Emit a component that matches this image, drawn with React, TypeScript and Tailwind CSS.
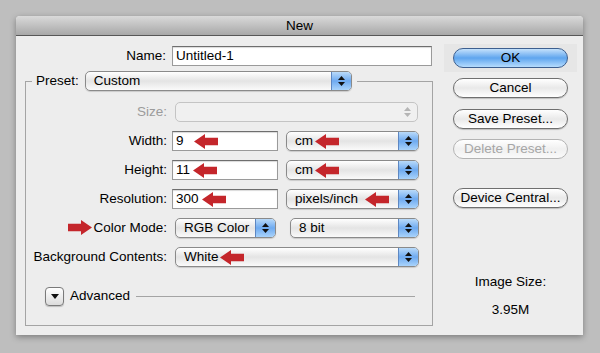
import React from 'react';

function RedArrow({ dir = 'left', className = '' }: { dir?: 'left' | 'right'; className?: string }) {
  return (
    <svg
      width="24"
      height="15"
      viewBox="0 0 24 15"
      className={`absolute ${className}`}
      style={dir === 'right' ? { transform: 'scaleX(-1)' } : undefined}
    >
      <polygon points="0,7.5 11,0 11,3.8 24,3.8 24,11.2 11,11.2 11,15" fill="#c4262b" />
    </svg>
  );
}

function Stepper({ disabled }: { disabled?: boolean }) {
  return (
    <div
      className={`w-[20px] h-full flex flex-col items-center justify-center gap-[2px] rounded-r-[4px] ${
        disabled ? '' : 'bg-gradient-to-b from-[#b9daf9] via-[#6eaaf0] to-[#a9d3fb] border-l border-[#5d87c2]'
      }`}
    >
      <svg width="7" height="4" viewBox="0 0 7 4">
        <polygon points="3.5,0 7,4 0,4" fill={disabled ? '#b5b5b5' : '#111'} />
      </svg>
      <svg width="7" height="4" viewBox="0 0 7 4">
        <polygon points="0,0 7,0 3.5,4" fill={disabled ? '#b5b5b5' : '#111'} />
      </svg>
    </div>
  );
}

function Select({
  width,
  value,
  disabled,
  children,
}: {
  width: string;
  value?: string;
  disabled?: boolean;
  children?: React.ReactNode;
}) {
  return (
    <div
      className={`relative ${width} h-[20px] flex items-stretch rounded-[5px] border ${
        disabled
          ? 'border-[#c4c4c4] bg-[#f0f0f0]'
          : 'border-[#8a8a8a] bg-gradient-to-b from-white via-[#e4e4e4] to-[#fafafa] shadow-[0_1px_1px_rgba(0,0,0,0.15)]'
      }`}
    >
      <div className="flex-1 flex items-center pl-[8px] leading-none text-black">{value}</div>
      <Stepper disabled={disabled} />
      {children}
    </div>
  );
}

function TextInput({ width, value, children }: { width: string; value: string; children?: React.ReactNode }) {
  return (
    <div
      className={`relative ${width} h-[20px] flex items-center pl-[3px] bg-white border border-[#9a9a9a] border-t-[#6e6e6e] shadow-[inset_0_1px_1px_rgba(0,0,0,0.15)] leading-none text-black`}
    >
      {value}
      {children}
    </div>
  );
}

function Row({ label, labelClass = 'text-black', children }: { label: React.ReactNode; labelClass?: string; children: React.ReactNode }) {
  return (
    <div className="flex items-center h-[20px]">
      <div className={`relative w-[141px] text-right whitespace-nowrap ${labelClass}`}>{label}</div>
      <div className="flex items-center ml-[5px]">{children}</div>
    </div>
  );
}

function AquaButton({ label, primary, disabled }: { label: string; primary?: boolean; disabled?: boolean }) {
  return (
    <div
      className={`w-[115px] h-[20px] rounded-full border flex items-center justify-center leading-none ${
        primary
          ? 'border-[#3d5f8f] bg-gradient-to-b from-[#c4e1fb] via-[#5ea5ee] to-[#b5dcfd] text-black'
          : disabled
          ? 'border-[#b3b3b3] bg-gradient-to-b from-white via-[#f0f0f0] to-[#fafafa] text-[#a6a6a6]'
          : 'border-[#6f6f6f] bg-gradient-to-b from-white via-[#e9e9e9] to-white text-black shadow-[0_1px_1px_rgba(0,0,0,0.2)]'
      }`}
    >
      {label}
    </div>
  );
}

export default function App() {
  return (
    <div className="w-[600px] h-[353px] bg-[#bebebe] pt-[16px] pl-[16px] font-['Liberation_Sans',sans-serif] text-[13.5px] overflow-hidden">
      <div className="w-[567px] h-[319px] bg-[#ededed] flex flex-col rounded-t-[4px] shadow-[0_2px_6px_rgba(0,0,0,0.35)]">
        <div className="h-[20px] rounded-t-[4px] bg-gradient-to-b from-[#dadada] to-[#a8a8a8] border-b border-[#575757] flex items-center justify-center text-black leading-none">
          New
        </div>
        <div className="flex flex-1">
          <div className="w-[416px] pl-[9px] pt-[10px]">
            <div className="flex items-center h-[20px]">
              <div className="w-[141px] text-right text-black">Name:</div>
              <div className="ml-[6px]">
                <TextInput width="w-[260px]" value="Untitled-1" />
              </div>
            </div>

            <div className="mt-[15px] w-[408px] h-[245px] border border-[#a4a4a4]">
              <div className="-mt-[11px] ml-[6px] w-fit flex items-center bg-[#ededed] pl-[4px] pr-[5px] h-[20px]">
                <span className="text-black mr-[6px]">Preset:</span>
                <Select width="w-[267px]" value="Custom" />
              </div>

              <div className="mt-[11px] flex flex-col gap-[9px]">
                <Row label="Size:" labelClass="text-[#9b9b9b]">
                  <div className="ml-[3px]">
                    <Select width="w-[243px]" disabled />
                  </div>
                </Row>
                <Row label="Width:">
                  <TextInput width="w-[106px]" value="9">
                    <RedArrow className="left-[21px] top-[1.5px]" />
                  </TextInput>
                  <div className="ml-[8px]">
                    <Select width="w-[133px]" value="cm">
                      <RedArrow className="left-[28px] top-[1.5px]" />
                    </Select>
                  </div>
                </Row>
                <Row label="Height:">
                  <TextInput width="w-[106px]" value="11">
                    <RedArrow className="left-[20px] top-[1.5px]" />
                  </TextInput>
                  <div className="ml-[8px]">
                    <Select width="w-[133px]" value="cm">
                      <RedArrow className="left-[28px] top-[1.5px]" />
                    </Select>
                  </div>
                </Row>
                <Row label="Resolution:">
                  <TextInput width="w-[106px]" value="300">
                    <RedArrow className="left-[29px] top-[1.5px]" />
                  </TextInput>
                  <div className="ml-[8px]">
                    <Select width="w-[133px]" value="pixels/inch">
                      <RedArrow className="left-[78px] top-[1.5px]" />
                    </Select>
                  </div>
                </Row>
                <Row
                  label={
                    <>
                      <RedArrow dir="right" className="left-[42px] top-[2px]" />
                      Color Mode:
                    </>
                  }
                >
                  <div className="ml-[3px]">
                    <Select width="w-[101px]" value="RGB Color" />
                  </div>
                  <div className="ml-[14px]">
                    <Select width="w-[129px]" value="8 bit" />
                  </div>
                </Row>
                <Row label="Background Contents:">
                  <div className="ml-[3px]">
                    <Select width="w-[244px]" value="White">
                      <RedArrow className="left-[44px] top-[1.5px]" />
                    </Select>
                  </div>
                </Row>
              </div>

              <div className="mt-[20px] ml-[19px] flex items-center h-[19px]">
                <div className="w-[19px] h-[19px] rounded-[4px] border border-[#7a7a7a] bg-gradient-to-b from-white to-[#dcdcdc] flex items-center justify-center shadow-[0_1px_1px_rgba(0,0,0,0.2)]">
                  <svg width="8" height="5" viewBox="0 0 8 5">
                    <polygon points="0,0 8,0 4,5" fill="#111" />
                  </svg>
                </div>
                <span className="ml-[6px] text-black">Advanced</span>
                <div className="ml-[6px] w-[279px] h-px bg-[#a4a4a4]" />
              </div>
            </div>
          </div>

          <div className="flex-1 flex flex-col pl-[12px] pt-[8px]">
            <div className="w-[133px] h-[28px] bg-[#e6e6e6] flex items-center justify-center">
              <AquaButton label="OK" primary />
            </div>
            <div className="ml-[9px] mt-[6px] flex flex-col">
              <AquaButton label="Cancel" />
              <div className="mt-[11px]">
                <AquaButton label="Save Preset..." />
              </div>
              <div className="mt-[10px]">
                <AquaButton label="Delete Preset..." disabled />
              </div>
              <div className="mt-[29px]">
                <AquaButton label="Device Central..." />
              </div>
              <div className="w-[115px] mt-[67px] flex flex-col items-center text-black leading-none">
                <span>Image Size:</span>
                <span className="mt-[14px]">3.95M</span>
              </div>
            </div>
          </div>
        </div>
      </div>
    </div>
  );
}
